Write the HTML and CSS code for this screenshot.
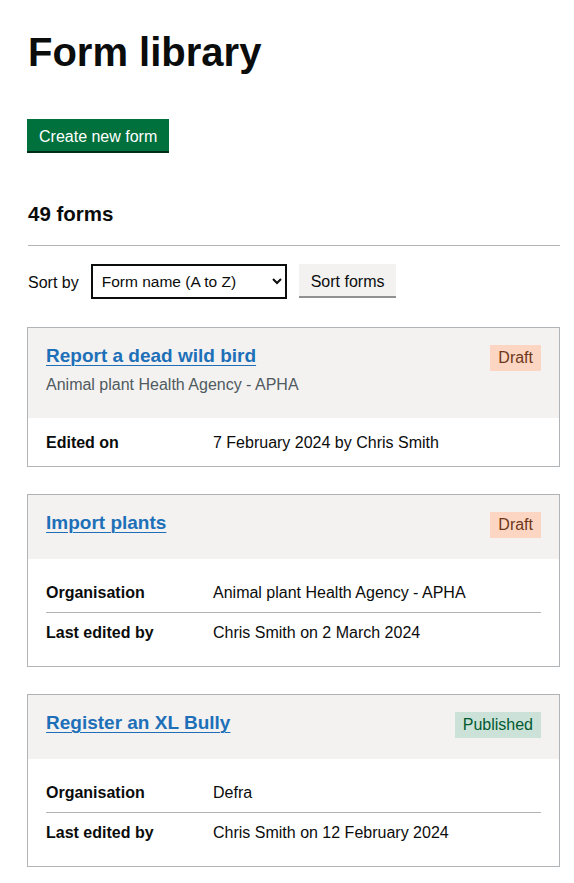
FILE: index.html
```html
<!DOCTYPE html>
<html lang="en">
<head>
<meta charset="utf-8">
<title>Form library</title>
<link rel="stylesheet" href="styles.css">
</head>
<body>
<main class="page">
  <h1 class="page-title">Form library</h1>
  <button class="btn btn--primary" type="button">Create new form</button>

  <h2 class="count">49 forms</h2>
  <hr class="rule">

  <form class="sort">
    <label class="sort__label" for="sort">Sort by</label>
    <select class="sort__select" id="sort">
      <option>Form name (A to Z)</option>
      <option>Form name (Z to A)</option>
      <option>Last edited</option>
    </select>
    <button class="btn btn--secondary" type="button">Sort forms</button>
  </form>

  <section class="card">
    <div class="card__head">
      <div class="card__titles">
        <a class="card__title" href="#">Report a dead wild bird</a>
        <p class="card__sub">Animal plant Health Agency - APHA</p>
      </div>
      <span class="tag tag--draft">Draft</span>
    </div>
    <dl class="card__body card__body--compact">
      <div class="row">
        <dt class="row__key">Edited on</dt>
        <dd class="row__value">7 February 2024 by Chris Smith</dd>
      </div>
    </dl>
  </section>

  <section class="card">
    <div class="card__head">
      <div class="card__titles">
        <a class="card__title" href="#">Import plants</a>
      </div>
      <span class="tag tag--draft">Draft</span>
    </div>
    <dl class="card__body">
      <div class="row">
        <dt class="row__key">Organisation</dt>
        <dd class="row__value">Animal plant Health Agency - APHA</dd>
      </div>
      <div class="row">
        <dt class="row__key">Last edited by</dt>
        <dd class="row__value">Chris Smith on 2 March 2024</dd>
      </div>
    </dl>
  </section>

  <section class="card">
    <div class="card__head">
      <div class="card__titles">
        <a class="card__title" href="#">Register an XL Bully</a>
      </div>
      <span class="tag tag--published">Published</span>
    </div>
    <dl class="card__body">
      <div class="row">
        <dt class="row__key">Organisation</dt>
        <dd class="row__value">Defra</dd>
      </div>
      <div class="row">
        <dt class="row__key">Last edited by</dt>
        <dd class="row__value">Chris Smith on 12 February 2024</dd>
      </div>
    </dl>
  </section>
</main>
</body>
</html>
```

FILE: styles.css
```css
* { box-sizing: border-box; }

html, body {
  margin: 0;
  padding: 0;
  background: #ffffff;
}

body {
  font-family: "Liberation Sans", Arial, sans-serif;
  color: #0b0c0c;
  font-size: 16px;
  line-height: 20px;
}

.page {
  padding: 30px 14px 0 27px;
  display: flex;
  flex-direction: column;
  align-items: flex-start;
}

.page-title {
  margin: 0 0 45px 1px;
  font-size: 40px;
  line-height: 44px;
  font-weight: 700;
}

.btn {
  font-family: inherit;
  font-size: 16px;
  line-height: 19px;
  border: 0;
  border-radius: 0;
  padding: 8px 12px 5px;
  cursor: pointer;
}

.btn--primary {
  background: #00703c;
  color: #ffffff;
  box-shadow: 0 2px 0 #002d18;
}

.btn--secondary {
  background: #f3f2f1;
  color: #0b0c0c;
  box-shadow: 0 2px 0 #929191;
}

.count {
  margin: 50px 0 0 1px;
  font-size: 20.5px;
  line-height: 25px;
  font-weight: 700;
}

.rule {
  align-self: stretch;
  margin: 19px 0 0 1px;
  border: 0;
  border-top: 1px solid #b1b4b6;
  height: 0;
}

.sort {
  margin: 18px 0 27px 1px;
  display: flex;
  align-items: flex-start;
  gap: 12px;
}

.sort__label {
  line-height: 35px;
  padding-top: 1px;
}

.sort__select {
  width: 196px;
  height: 35px;
  font-family: inherit;
  font-size: 15.5px;
  color: #0b0c0c;
  background: #ffffff;
  border: 2px solid #0b0c0c;
  border-radius: 0;
  padding: 0 8px 0 5px;
}

.card {
  align-self: stretch;
  border: 1px solid #b1b4b6;
  margin-bottom: 27px;
}

.card__head {
  background: #f3f2f1;
  padding: 15px 18px 21px;
  display: flex;
  justify-content: space-between;
  align-items: flex-start;
}

.card__titles {
  display: flex;
  flex-direction: column;
}

.card__title {
  font-size: 19px;
  line-height: 25px;
  font-weight: 700;
  color: #1d70b8;
  text-decoration: underline;
  text-decoration-thickness: 1px;
  text-underline-offset: 3px;
}

.card__sub {
  margin: 7px 0 2px;
  color: #505a5f;
  font-size: 16px;
  line-height: 20px;
}

.tag {
  margin-top: 2px;
  padding: 3px 8px;
  font-size: 16px;
  line-height: 20px;
}

.tag--draft {
  background: #fcd6c3;
  color: #6e3619;
}

.tag--published {
  background: #cce2d8;
  color: #005a30;
}

.card__body {
  margin: 0;
  padding: 14px 18px 13px;
}

.card__body--compact {
  padding: 15px 18px 13px;
}

.row {
  display: flex;
  padding: 10px 0;
  border-bottom: 1px solid #b1b4b6;
}

.row:first-child {
  padding-bottom: 9px;
}

.row:last-child {
  border-bottom: 0;
}

.card__body--compact .row {
  padding: 0;
}

.row__key {
  width: 167px;
  flex: none;
  font-weight: 700;
}

.row__value {
  margin: 0;
}
```
